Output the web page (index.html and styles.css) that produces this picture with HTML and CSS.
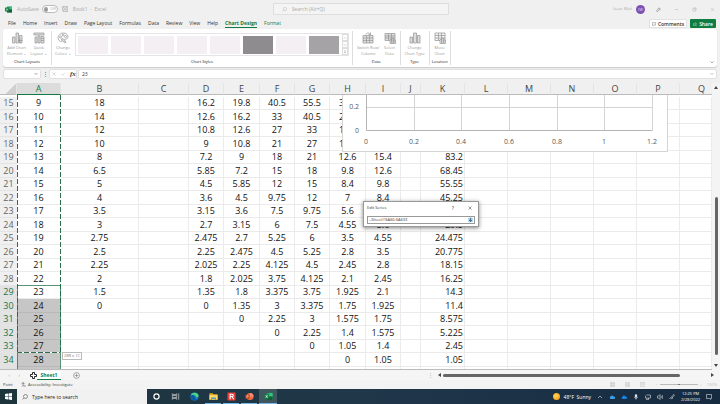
FILE: index.html
```html
<!DOCTYPE html>
<html lang="en">
<head>
<meta charset="UTF-8">
<meta name="viewport" content="width=device-width, initial-scale=1.0">
<title>Book1 - Excel</title>
<link rel="stylesheet" href="styles.css">
</head>
<body>

<header class="titlebar">
    <svg class="logo" viewBox="0 0 14 14"><rect x="4" y="1" width="10" height="12" rx="1" fill="#21a366"/><rect x="9" y="1" width="5" height="6" fill="#33c481"/><rect x="4" y="7" width="10" height="6" fill="#185c37"/><rect x="0" y="3" width="8" height="8" rx="1" fill="#107c41"/><path d="M2.300 5l3.400 4M5.700 5l-3.400 4" stroke="#fff" stroke-width="1.200"/></svg>
    <label class="autosave">AutoSave <span class="switch"><input type="checkbox"><span>Off</span></span></label>
    <svg class="save" viewBox="0 0 14 14" fill="none" stroke="#aaa" stroke-width="1.500"><path d="M1 1h12v12H3l-2-2zM4 1v4h6V1M4 13V8h6v5"/></svg>
    <span class="book">Book1 &nbsp;-&nbsp; Excel</span>
    <label class="search">
        <svg viewBox="0 0 12 12" fill="none" stroke="#aaa"><circle cx="7" cy="5" r="4"/><path d="M4 8L1 11"/></svg>
        <input type="text" placeholder="Search (Alt+Q)" aria-label="Search">
    </label>
    <div class="account">
        <span>Isaac Wait</span>
        <span class="avatar">IW</span>
        <svg viewBox="0 0 12 12" fill="none" stroke="#666"><path d="M2 8l5-6 3 2-5 6-3 1zM6 3l3 3M9 8l2-2"/></svg>
        <button aria-label="Minimize"><svg viewBox="0 0 12 12" stroke="#aaa"><path d="M2 6h8"/></svg></button>
        <button aria-label="Restore"><svg viewBox="0 0 12 12" fill="none" stroke="#aaa"><path d="M2 4h6v6H2zM4 4V2h6v6H8"/></svg></button>
        <button aria-label="Close"><svg viewBox="0 0 12 12" stroke="#aaa"><path d="M2 2l8 8M10 2l-8 8"/></svg></button>
    </div>
</header>

<nav class="menu">
    <a href="#">File</a>
    <a href="#">Home</a>
    <a href="#">Insert</a>
    <a href="#">Draw</a>
    <a href="#">Page Layout</a>
    <a href="#">Formulas</a>
    <a href="#">Data</a>
    <a href="#">Review</a>
    <a href="#">View</a>
    <a href="#">Help</a>
    <a href="#" class="green active">Chart Design</a>
    <a href="#" class="green">Format</a>
    <button class="comments"><svg viewBox="0 0 12 12" fill="none" stroke="#333"><path d="M1 2h10v7H5l-2 2V9H1z"/></svg>Comments</button>
    <button class="share"><svg viewBox="0 0 12 12" fill="none" stroke="#fff"><path d="M4 5H1v6h9V8M3 8c1-3 3-4 5-4V2l3 3-3 3V6"/></svg>Share</button>
</nav>

<section class="ribbon">
    <div class="group">
        <div class="tools">
            <button><svg viewBox="0 0 24 24" fill="#ddd" stroke="#999" stroke-width="1.500"><path d="M3 10h5v12H3zM10 2h5v20h-5zM17 7h5v15h-5z"/><path d="M14 17h9M18 13v9"/></svg>Add Chart<br>Element ⌄</button>
            <button><svg viewBox="0 0 24 24" fill="#ddd" stroke="#999" stroke-width="1.500"><path d="M2 2h20v4H2zM4 10h4v12H4zM10 8h4v14h-4z"/><path d="M16 9h6v13h-6zM16 13h6M16 17h6"/></svg>Quick<br>Layout ⌄</button>
        </div>
        <span class="name">Chart Layouts</span>
    </div>
    <div class="group styles">
        <div class="tools">
            <button><svg viewBox="0 0 24 24" fill="none" stroke="#999" stroke-width="1.500"><path d="M10 19c-5 1-8-4-8-8 0-5 5-9 11-9 5 0 9 3 9 8 0 3-2 4-4 4-3 0-4 1-3 4"/><circle cx="7" cy="10" r="2"/><circle cx="12" cy="6" r="2"/><circle cx="17" cy="9" r="2"/><path d="M8 15l4-2 6 7-2 2z" fill="#ddd"/></svg>Change<br>Colors ⌄</button>
            <div class="gallery">
                <button class="thumb" aria-label="Style 1"></button>
                <button class="thumb" aria-label="Style 2"></button>
                <button class="thumb" aria-label="Style 3"></button>
                <button class="thumb" aria-label="Style 4"></button>
                <button class="thumb" aria-label="Style 5"></button>
                <button class="thumb dark" aria-label="Style 6"></button>
                <button class="thumb" aria-label="Style 7"></button>
                <button class="thumb mid" aria-label="Style 8"></button>
                <div class="arrows">
                    <button aria-label="Up"><svg viewBox="0 0 8 8" fill="none" stroke="#aaa"><path d="M2 5l2-2 2 2"/></svg></button>
                    <button aria-label="Down"><svg viewBox="0 0 8 8" fill="none" stroke="#888"><path d="M2 3l2 2 2-2"/></svg></button>
                    <button aria-label="More"><svg viewBox="0 0 8 8" fill="none" stroke="#888"><path d="M2 2h4M2 4l2 2 2-2"/></svg></button>
                </div>
            </div>
        </div>
        <span class="name">Chart Styles</span>
    </div>
    <div class="group">
        <div class="tools">
            <button><svg viewBox="0 0 24 24" fill="#ddd" stroke="#999" stroke-width="1.500"><path d="M2 7h20v15H2zM2 12h20M2 17h20M9 7v15M15 7v15"/><path d="M7 5c3-4 8-4 10 0M17 1v4h-4" fill="none"/></svg>Switch Row/<br>Column</button>
            <button><svg viewBox="0 0 24 24" fill="#ddd" stroke="#999" stroke-width="1.500"><path d="M2 3h20v14H2zM2 8h20M2 12h20M9 3v14M15 3v14"/><path d="M12 15h3v8h-3zM16 12h3v11h-3zM20 16h3v7h-3z"/></svg>Select<br>Data</button>
        </div>
        <span class="name">Data</span>
    </div>
    <div class="group">
        <div class="tools">
            <button><svg viewBox="0 0 24 24" fill="#ddd" stroke="#999" stroke-width="1.500"><path d="M2 10h5v12H2zM9 2h6v20H9zM17 7h5v15h-5z"/></svg>Change<br>Chart Type</button>
        </div>
        <span class="name">Type</span>
    </div>
    <div class="group narrow">
        <div class="tools">
            <button><svg viewBox="0 0 24 24" fill="#f4f4f4" stroke="#999" stroke-width="1.500"><path d="M2 2h20v15H2zM2 7h20M2 12h20M9 2v15M15 2v15"/><path d="M12 15h3v8h-3zM16 12h3v11h-3zM20 16h3v7h-3z"/></svg>Move<br>Chart</button>
        </div>
        <span class="name">Location</span>
    </div>
    <button class="collapse" aria-label="Collapse ribbon"><svg viewBox="0 0 8 8" fill="none" stroke="#555"><path d="M1 3l3 3 3-3"/></svg></button>
</section>

<div class="formulabar">
    <div class="namebox"><select aria-label="Name box"><option></option></select><svg viewBox="0 0 8 8" fill="none" stroke="#555"><path d="M1 2l3 3 3-3"/></svg></div>
    <span class="dots">⋮</span>
    <div class="fx">
        <svg viewBox="0 0 10 10" stroke="#aaa"><path d="M1 1l8 8M9 1L1 9"/></svg>
        <svg viewBox="0 0 10 10" fill="none" stroke="#aaa"><path d="M1 6l3 3 5-7"/></svg>
        <i>fx</i>
    </div>
    <div class="formula"><input type="text" value="23" aria-label="Formula"><svg viewBox="0 0 8 8" fill="none" stroke="#888"><path d="M1 2l3 3 3-3"/></svg></div>
</div>

<main class="workarea">
    <div class="sheet">
        <table class="grid">
            <colgroup>
                <col class="num"><col class="c44"><col class="c78"><col class="c50">
                <col class="c35"><col class="c36"><col class="c35"><col class="c35"><col class="c36"><col class="c35">
                <col class="c20"><col class="c44">
                <col class="c43"><col class="c43"><col class="c43"><col class="c43"><col class="c43"><col>
            </colgroup>
            <thead>
                <tr>
                    <th class="corner"></th><th class="picked">A</th><th>B</th><th>C</th><th>D</th><th>E</th><th>F</th><th>G</th><th>H</th><th>I</th><th>J</th><th>K</th><th>L</th><th>M</th><th>N</th><th>O</th><th>P</th><th class="last">Q</th>
                </tr>
            </thead>
            <tbody id="rows"></tbody>
        </table>
        <div class="ants"></div>
        <div class="selection"></div>
        <span class="sizetip">28R x 1C</span>

        <svg class="chart" viewBox="0 0 324 56">
            <path d="M71.500 0v35M118.500 0v35M166.500 0v35M214.500 0v35M261.500 0v35M309.500 0v35M23 12.500h287" stroke="#d4d4d4" fill="none"/>
            <path d="M23.500 0v35.500h286" stroke="#b5b5b5" fill="none"/>
            <g text-anchor="end"><text x="16" y="14">0.2</text><text x="16" y="38">0</text></g>
            <g text-anchor="middle"><text x="23" y="49">0</text><text x="71" y="49">0.2</text><text x="118" y="49">0.4</text><text x="166" y="49">0.6</text><text x="214" y="49">0.8</text><text x="261" y="49">1</text><text x="309" y="49">1.2</text></g>
        </svg>

        <form class="dialog">
            <div class="dialog-title">
                <label for="series">Edit Series</label>
                <button type="button">?</button>
                <button type="button" aria-label="Close"><svg viewBox="0 0 8 8" stroke="#333"><path d="M1 1l6 6M7 1L1 7"/></svg></button>
            </div>
            <div class="dialog-input">
                <input type="text" id="series" value="=Sheet1!$A$6:$A$33">
                <button type="button" aria-label="Expand"><svg viewBox="0 0 8 8"><rect x="1" y="1" width="6" height="6" fill="#a9cbe0"/><path d="M4 1v5M2 4l2 2 2-2" stroke="#1e6091" fill="none"/></svg></button>
            </div>
        </form>
    </div>
    <div class="vscroll"><span class="up"></span><span class="thumbbar"></span><span class="down"></span></div>
</main>

<div class="sheettabs">
    <span class="arrow">‹</span><span class="arrow">›</span>
    <svg class="cross" viewBox="0 0 14 14"><path d="M5 1h4v4h4v4H9v4H5V9H1V5h4z" fill="#fff" stroke="#111" stroke-width="1.800"/></svg>
    <button class="tab">Sheet1</button>
    <button class="add" aria-label="New sheet"><svg viewBox="0 0 12 12" fill="none" stroke="#777"><circle cx="6" cy="6" r="5"/><path d="M3 6h6M6 3v6"/></svg></button>
    <div class="hscroll"><span class="grip">⋮</span><span class="left"></span><span class="bar"></span><span class="right"></span></div>
</div>

<div class="status">
    <span class="mode">Point</span>
    <svg viewBox="0 0 12 12" fill="none" stroke="#444"><circle cx="5" cy="2" r="1"/><path d="M1 4h8M5 4v3l-2 4M5 7l2 4M8 8l3 3M11 8l-3 3"/></svg>
    <span>Accessibility: Investigate</span>
    <div class="views">
        <svg viewBox="0 0 12 12" fill="none" stroke="#bbb"><path d="M1 1h10v10H1zM1 4h10M1 8h10M4 1v10M8 1v10"/></svg>
        <svg viewBox="0 0 12 12" fill="none" stroke="#bbb"><path d="M1 1h10v10H1zM3 3h6v6H3zM3 6h6"/></svg>
        <svg viewBox="0 0 12 12" fill="none" stroke="#bbb"><path d="M1 1h10v10H1zM4 1v6h4V1"/></svg>
        <span class="zoom">−<span class="track"></span>+</span>
        <span>100%</span>
    </div>
</div>

<footer class="taskbar">
    <button class="start" aria-label="Start"><svg viewBox="0 0 14 14" fill="#fff"><path d="M0 2l6-1v5.500H0zM7 1l7-1v6.500H7zM0 7.500h6V13l-6-1zM7 7.500h7V14l-7-1z"/></svg></button>
    <label class="find">
        <svg viewBox="0 0 12 12" fill="none" stroke="#333"><circle cx="7" cy="5" r="4"/><path d="M4 8L1 11"/></svg>
        <input type="text" placeholder="Type here to search" aria-label="Type here to search">
    </label>
    <button class="app" aria-label="Cortana"><svg viewBox="0 0 14 14" fill="none" stroke="#fff" stroke-width="1.800"><circle cx="7" cy="7" r="4"/></svg></button>
    <button class="app" aria-label="Task view"><svg viewBox="0 0 14 14" fill="none" stroke="#ddd"><path d="M2 2v2h7V2M2 12v-2h7v2M2 5.500h7v3H2zM12 2v10"/></svg></button>
    <button class="app" aria-label="Edge"><svg viewBox="0 0 20 20"><circle cx="10" cy="10" r="9" fill="#1b8fd9"/><path d="M2 7C5 0 17 0 19 8c0 4-4 5-7 4 2-4-4-8-10-5z" fill="#4fd27a"/><path d="M2 8c5-3 10 0 9 4 0 2 3 4 6 3-3 5-11 5-14 0-1-2-1-5-1-7z" fill="#0c59a4"/><path d="M11 9c2 1 2 3 1 4 2 1 5 1 7-2-1 2-8 4-8-2z" fill="#1c3440"/></svg></button>
    <button class="app open" aria-label="File Explorer"><svg viewBox="0 0 20 20"><path d="M1 3h7l2 2h9v12H1z" fill="#e8a922"/><path d="M1 7h18v10H1z" fill="#ffd968"/><path d="M5 12h10v5h-2v-2H7v2H5z" fill="#2a8dd6"/></svg></button>
    <button class="app open" aria-label="Reader"><svg viewBox="0 0 20 20"><rect x="1" y="1" width="18" height="18" rx="1" fill="#e5403a"/><path d="M7 16V5h4c4 0 4 5 0 5H7m4 0l4 6" stroke="#fff" stroke-width="2.500" fill="none"/></svg></button>
    <button class="app open" aria-label="PowerPoint"><svg viewBox="0 0 20 20"><circle cx="11" cy="10" r="8" fill="#ed6c47"/><path d="M11 2a8 8 0 0 1 8 8h-8z" fill="#ff8f6b"/><rect x="1" y="6" width="9" height="9" rx="1" fill="#c43e1c"/><path d="M4 13V8h2c2 0 2 3 0 3H4" stroke="#fff" fill="none"/></svg></button>
    <button class="app open current" aria-label="Excel"><svg viewBox="0 0 20 20"><rect x="6" y="2" width="13" height="16" rx="1" fill="#21a366"/><path d="M12 2h7v8h-7z" fill="#33c481"/><path d="M6 10h13v8H6z" fill="#185c37"/><rect x="1" y="5" width="10" height="10" rx="1" fill="#107c41"/><path d="M4 7l4 6M8 7l-4 6" stroke="#fff" stroke-width="1.500"/></svg></button>
    <div class="tray">
        <span class="sun"></span>
        <span class="weather">48°F &nbsp;Sunny</span>
        <svg viewBox="0 0 12 12" fill="none" stroke="#fff"><path d="M2 8l4-4 4 4"/></svg>
        <svg viewBox="0 0 12 12" fill="#3aa0ea"><path d="M3 10a3 3 0 0 1 0-5c1-3 5-3 6 0 4 0 4 5 1 5z"/></svg>
        <svg viewBox="0 0 12 12" fill="#1683e0"><path d="M3 10a3 3 0 0 1 0-5c1-3 5-3 6 0 4 0 4 5 1 5z"/></svg>
        <svg viewBox="0 0 12 12" fill="#fff" stroke="#fff"><rect x="4.500" y="1" width="3" height="6" rx="1.500"/><path d="M3 6c0 4 6 4 6 0M6 9v2" fill="none"/></svg>
        <svg viewBox="0 0 12 12" fill="none" stroke="#fff"><path d="M3 2h8v6H4M1 3v5h2v3h5M7 8v2"/></svg>
        <svg viewBox="0 0 12 12" fill="none" stroke="#fff"><path d="M1 4h2l3-3v10L3 8H1zM8 4c1 1 1 3 0 4M10 2c2 2 2 6 0 8"/></svg>
        <svg viewBox="0 0 12 12" fill="none" stroke="#fff"><path d="M1 10c2-4 3-3 4-1s3-1 1-2 1-4 4-6l1 1-5 6"/></svg>
        <span class="clock">12:25 PM<br>2/28/2022</span>
        <svg viewBox="0 0 12 12" fill="none" stroke="#fff"><path d="M1 1h10v8H9v2L7 9H1z"/></svg>
    </div>
</footer>

<script>
    // columns A to K, the rest of the row stays empty
    var rows = [
        [15, '9', '18', '', '16.2', '19.8', '40.5', '55.5', '3'],
        [16, '10', '14', '', '12.6', '16.2', '33', '40.5', '2'],
        [17, '11', '12', '', '10.8', '12.6', '27', '33', '1'],
        [18, '12', '10', '', '9', '10.8', '21', '27', '1'],
        [19, '13', '8', '', '7.2', '9', '18', '21', '12.6', '15.4', '', '83.2'],
        [20, '14', '6.5', '', '5.85', '7.2', '15', '18', '9.8', '12.6', '', '68.45'],
        [21, '15', '5', '', '4.5', '5.85', '12', '15', '8.4', '9.8', '', '55.55'],
        [22, '16', '4', '', '3.6', '4.5', '9.75', '12', '7', '8.4', '', '45.25'],
        [23, '17', '3.5', '', '3.15', '3.6', '7.5', '9.75', '5.6'],
        [24, '18', '3', '', '2.7', '3.15', '6', '7.5', '4.55', '5.6', '', '29.5'],
        [25, '19', '2.75', '', '2.475', '2.7', '5.25', '6', '3.5', '4.55', '', '24.475'],
        [26, '20', '2.5', '', '2.25', '2.475', '4.5', '5.25', '2.8', '3.5', '', '20.775'],
        [27, '21', '2.25', '', '2.025', '2.25', '4.125', '4.5', '2.45', '2.8', '', '18.15'],
        [28, '22', '2', '', '1.8', '2.025', '3.75', '4.125', '2.1', '2.45', '', '16.25'],
        [29, '23', '1.5', '', '1.35', '1.8', '3.375', '3.75', '1.925', '2.1', '', '14.3'],
        [30, '24', '0', '', '0', '1.35', '3', '3.375', '1.75', '1.925', '', '11.4'],
        [31, '25', '', '', '', '0', '2.25', '3', '1.575', '1.75', '', '8.575'],
        [32, '26', '', '', '', '', '0', '2.25', '1.4', '1.575', '', '5.225'],
        [33, '27', '', '', '', '', '', '0', '1.05', '1.4', '', '2.45'],
        [34, '28', '', '', '', '', '', '', '0', '1.05', '', '1.05'],
        ['', '']
    ];

    var body = document.getElementById('rows');
    for (var i = 0; i < rows.length; i++) {
        var tr = document.createElement('tr');
        if (i >= 14) {
            tr.className = 'selected';
        }
        for (var c = 0; c < 18; c++) {
            var cell = document.createElement(c === 0 ? 'th' : 'td');
            cell.textContent = rows[i][c] === undefined ? '' : rows[i][c];
            if (c === 1 && i > 14) {
                cell.className = 'shaded';
            }
            // column H runs under the chart here
            if (c === 8 && i < 4) {
                cell.className = 'cut';
            }
            if (c === 11) {
                cell.className = 'total';
            }
            tr.appendChild(cell);
        }
        body.appendChild(tr);
    }
</script>

</body>
</html>
```

FILE: styles.css
```css
* {
    box-sizing: border-box;
}
body {
    margin: 0;
    height: 100vh;
    display: flex;
    flex-direction: column;
    overflow: hidden;
    background: #f0f0f0;
    font-family: "Open Sans", "Noto Sans", sans-serif;
    font-size: 5px;
    line-height: 6px;
    color: #333;
}
button, input, select {
    font: inherit;
    color: inherit;
    border: none;
    background: none;
    padding: 0;
    margin: 0;
    outline: none;
}
svg {
    display: block;
    flex: none;
}
a {
    color: inherit;
    text-decoration: none;
}

/* title bar */
.titlebar {
    display: grid;
    grid-template-columns: auto auto auto 3fr auto 4fr;
    align-items: center;
    height: 18px;
    padding: 0 5px;
    color: #aaa;
}
.logo {
    width: 7px;
    height: 7px;
}
.autosave {
    display: flex;
    align-items: center;
    gap: 3px;
    margin-left: 5px;
}
.switch {
    display: flex;
    align-items: center;
    gap: 2px;
    width: 16px;
    height: 8px;
    padding: 0 1px;
    border: 1px solid #bbb;
    border-radius: 4px;
    font-size: 4px;
    background: #fff;
}
.switch input {
    appearance: none;
    width: 5px;
    height: 5px;
    border-radius: 50%;
    background: #999;
}
.save {
    width: 6px;
    height: 6px;
    margin: 0 5px 0 4px;
}
.search {
    display: flex;
    align-items: center;
    gap: 5px;
    width: 176px;
    height: 12px;
    padding: 0 8px;
    border: 1px solid #dedede;
    background: #f4f4f4;
}
.search svg {
    width: 5px;
    height: 5px;
}
.search input::placeholder {
    color: #aaa;
}
.account {
    display: flex;
    align-items: center;
    justify-content: flex-end;
    gap: 11px;
}
.account > span:first-child {
    font-size: 4px;
}
.account svg {
    width: 5px;
    height: 5px;
}
.account button {
    margin-left: 2px;
}
.avatar {
    width: 9px;
    height: 9px;
    margin-left: -7px;
    border-radius: 50%;
    background: #7a52b3;
    color: #e8dcf8;
    font-size: 4px;
    line-height: 9px;
    text-align: center;
}

/* ribbon tabs */
.menu {
    display: flex;
    align-items: center;
    gap: 7px;
    height: 11px;
    padding: 0 4px 0 8px;
}
.menu a {
    line-height: 8px;
    border-bottom: 1px solid transparent;
}
.menu .green {
    color: #107c41;
}
.menu .active {
    font-weight: bold;
    border-color: #107c41;
}
.menu button {
    display: flex;
    align-items: center;
    gap: 2px;
    height: 9px;
    padding: 0 2px;
    border-radius: 1px;
    font-weight: 600;
}
.menu button svg {
    width: 4px;
    height: 4px;
}
.menu .comments {
    margin-left: auto;
    background: #fff;
    border: 1px solid #e2e2e2;
}
.menu .share {
    margin-left: -4px;
    padding: 0 3px;
    background: #107c41;
    color: #fff;
}

/* ribbon */
.ribbon {
    display: flex;
    height: 38px;
    margin: 0 3px;
    padding: 2px 0;
    border-radius: 3px;
    background: #fff;
    box-shadow: 0 1px 1px #ccc;
    font-size: 4px;
}
.group {
    display: flex;
    flex-direction: column;
    justify-content: space-between;
    align-items: center;
    padding: 0 4px;
    border-right: 1px solid #ddd;
}
.group.styles {
    padding: 0 3px;
}
.group.narrow {
    padding: 0 2px;
}
.tools {
    display: flex;
    gap: 4px;
}
.tools > button {
    display: flex;
    flex-direction: column;
    align-items: center;
    color: #999;
    white-space: nowrap;
}
.tools > button svg {
    width: 12px;
    height: 12px;
    margin: 1px 0;
}
.name {
    color: #222;
}
.gallery {
    display: flex;
    align-items: center;
    gap: 3px;
    height: 23px;
    margin-top: 2px;
    padding-left: 2px;
    border: 1px solid #e4e4e4;
}
.thumb {
    width: 30px;
    height: 18px;
    background: #f3eff3;
}
.thumb.dark {
    background: #8e8c8f;
}
.thumb.mid {
    background: #a5a3a6;
}
.arrows {
    display: flex;
    flex-direction: column;
    height: 100%;
}
.arrows button {
    flex: 1;
    border: 1px solid #ddd;
}
.arrows svg {
    width: 4px;
    height: 4px;
}
.collapse {
    align-self: flex-end;
    margin: 0 3px 1px auto;
}
.collapse svg {
    width: 4px;
    height: 4px;
}

/* formula bar */
.formulabar {
    display: flex;
    align-items: center;
    height: 10px;
    margin: 2px 3px 4px;
}
.namebox, .fx, .formula {
    display: flex;
    align-items: center;
    height: 10px;
    border: 1px solid #e0e0e0;
    border-radius: 2px;
    background: #fff;
}
.formulabar svg {
    width: 4px;
    height: 4px;
}
.namebox {
    width: 38px;
    padding-right: 2px;
}
.namebox select {
    flex: 1;
    min-width: 0;
    height: 8px;
    appearance: none;
}
.dots {
    width: 8px;
    text-align: center;
}
.fx {
    gap: 5px;
    width: 28px;
    padding-left: 2px;
}
.fx i {
    font-family: "Liberation Serif", serif;
    font-size: 7px;
    font-weight: bold;
}
.formula {
    flex: 1;
    margin-left: 1px;
    padding: 0 2px 0 3px;
}
.formula input {
    flex: 1;
}

/* worksheet */
.workarea {
    flex: 1;
    min-height: 0;
    display: flex;
}
.sheet {
    position: relative;
    flex: 1;
    min-width: 0;
    overflow: hidden;
    background: #fff;
    border-bottom: 1px solid #bbb;
}
.grid {
    table-layout: fixed;
    width: 100%;
    border-collapse: separate;
    border-spacing: 0;
    font-size: 9px;
    line-height: 12px;
}
.grid th, .grid td {
    padding: 0;
    overflow: hidden;
    white-space: nowrap;
    text-align: center;
    font-weight: normal;
}
.num {
    width: 17px;
}
.c20 {
    width: 20px;
}
.c35 {
    width: 35px;
}
.c36 {
    width: 36px;
}
.c43 {
    width: 43px;
}
.c44 {
    width: 44px;
}
.c50 {
    width: 50px;
}
.c78 {
    width: 78px;
}
.grid thead th {
    height: 12px;
    line-height: 11px;
    background: #f0f0f0;
    color: #444;
    border-right: 1px solid #e4e4e4;
    border-bottom: 1px solid #bbb;
}
.grid thead .corner {
    background: linear-gradient(135deg, #f0f0f0 60%, #d0d0d0 60%);
}
.grid thead .picked {
    background: #dcdcdc;
    color: #107c41;
    border-bottom-color: #107c41;
}
.grid thead .last {
    padding-left: 11px;
    border-right: none;
}
/* rest of the row scrolled under the header */
.grid tbody::before {
    content: "";
    display: table-row;
    height: 2px;
}
.grid tbody tr {
    height: 14px;
}
.grid tbody tr:nth-child(odd) {
    height: 13px;
}
.grid tbody td {
    color: #111;
    border-right: 1px solid #ebebeb;
    border-bottom: 1px solid #ebebeb;
}
.grid tbody th {
    background: #f0f0f0;
    color: #666;
    border-bottom: 1px solid #e4e4e4;
}
.grid tbody .selected th {
    background: #e2e2e2;
    color: #217346;
}
.grid tbody .shaded {
    background: #c6c6c6;
    border-bottom-color: #b8b8b8;
}
.grid tbody .cut {
    text-align: left;
    padding-left: 9px;
}
.grid tbody .total {
    text-align: right;
    padding-right: 1px;
}
.ants {
    position: absolute;
    top: 12px;
    left: 17px;
    width: 44px;
    height: 258px;
    background:
        repeating-linear-gradient(#2c6e4c 0 5px, #fff 5px 7px) left / 1px 100% no-repeat,
        repeating-linear-gradient(#2c6e4c 0 5px, #fff 5px 7px) right / 1px 100% no-repeat,
        repeating-linear-gradient(90deg, #2c6e4c 0 5px, #fff 5px 7px) bottom / 100% 1px no-repeat;
}
.selection {
    position: absolute;
    top: 202px;
    bottom: 0;
    left: 17px;
    width: 44px;
    border: 1px solid #1e7145;
    border-bottom: none;
    opacity: 0.7;
}
.sizetip {
    position: absolute;
    top: 269px;
    left: 62px;
    padding: 0 1px;
    border: 1px solid #bbb;
    background: #fff;
    color: #777;
    font-size: 4px;
}
.chart {
    position: absolute;
    top: 12px;
    left: 342px;
    width: 326px;
    height: 57px;
    background: #fff;
    border: 1px solid #d4d4d4;
    border-top: none;
}
.chart text {
    font-size: 7px;
    fill: #595959;
}
.dialog {
    position: absolute;
    top: 118px;
    left: 363px;
    width: 116px;
    padding: 0 3px 2px;
    border: 1px solid #999;
    background: #fff;
    box-shadow: 0 1px 4px rgba(0,0,0,0.5);
}
.dialog-title {
    display: flex;
    align-items: center;
    gap: 14px;
    height: 12px;
    padding-right: 3px;
}
.dialog-title label {
    margin-right: auto;
    font-size: 4px;
}
.dialog-title svg {
    width: 4px;
    height: 4px;
}
.dialog-input {
    display: flex;
    align-items: center;
    height: 8px;
    margin-top: 2px;
    border: 1px solid #999;
}
.dialog-input input {
    flex: 1;
    min-width: 0;
    height: 6px;
    padding-left: 1px;
    font-size: 4px;
}
.dialog-input svg {
    width: 7px;
    height: 6px;
}

/* scroll bars */
.vscroll {
    display: flex;
    flex-direction: column;
    align-items: center;
    width: 8px;
    padding: 1px 0;
    background: #f4f4f4;
}
.thumbbar {
    width: 3px;
    height: 158px;
    margin: auto 0 9px;
    border-radius: 2px;
    background: #666;
}
.up, .down {
    border: 2px solid transparent;
}
.up {
    border-bottom: 3px solid #444;
}
.down {
    border-top: 3px solid #444;
}

/* sheet tabs */
.sheettabs {
    display: flex;
    align-items: center;
    height: 10px;
    background: #f5f5f5;
}
.arrow {
    width: 10px;
    text-align: right;
    color: #999;
}
.cross {
    width: 7px;
    height: 7px;
    margin-left: 10px;
}
.tab {
    width: 24px;
    height: 9px;
    background: #fff;
    border-bottom: 1px solid #107c41;
    color: #107c41;
    font-weight: bold;
}
.add {
    margin-left: 12px;
}
.add svg {
    width: 7px;
    height: 7px;
}
.hscroll {
    display: flex;
    align-items: center;
    flex: 0 0 40%;
    margin: 0 4px 0 auto;
}
.grip {
    width: 8px;
    color: #aaa;
}
.bar {
    flex: 1;
    height: 3px;
    margin: 0 31px 0 2px;
    border-radius: 2px;
    background: #666;
}
.left, .right {
    border: 2px solid transparent;
}
.left {
    border-right: 3px solid #444;
}
.right {
    border-left: 3px solid #444;
}

/* status bar */
.status {
    display: flex;
    align-items: center;
    gap: 2px;
    height: 9px;
    padding: 0 3px;
    background: #f3f3f3;
    color: #333;
    font-size: 4px;
}
.status svg {
    width: 5px;
    height: 5px;
}
.mode {
    width: 16px;
}
.views {
    display: flex;
    align-items: center;
    gap: 10px;
    margin-left: auto;
    color: #bbb;
}
.zoom {
    display: flex;
    align-items: center;
    gap: 2px;
}
.views > :last-child {
    margin-left: -5px;
}
.track {
    width: 38px;
    height: 1px;
    background: linear-gradient(90deg, #bbb 48%, #777 48% 52%, #bbb 52%);
}

/* windows taskbar */
.taskbar {
    display: flex;
    align-items: center;
    height: 15px;
    background: linear-gradient(90deg, #1d343b, #20374a 50%, #172b40);
    color: #fff;
}
.start {
    display: grid;
    place-items: center;
    width: 17px;
}
.start svg {
    width: 7px;
    height: 7px;
}
.find {
    display: flex;
    align-items: center;
    gap: 4px;
    width: 130px;
    height: 15px;
    padding-left: 5px;
    background: #f1f1f1;
    color: #222;
}
.find svg {
    width: 6px;
    height: 6px;
}
.find input {
    height: 10px;
    min-width: 0;
}
.find input::placeholder {
    color: #222;
}
.app {
    display: grid;
    place-items: center;
    width: 18px;
    height: 15px;
    margin-right: 1px;
}
.app svg {
    width: 9px;
    height: 9px;
}
.app.open {
    width: 16px;
    margin-left: 1px;
    border-bottom: 1px solid #76b9ed;
}
.app.current {
    width: 18px;
    background: #40575f;
}
.tray {
    display: flex;
    align-items: center;
    gap: 6px;
    margin-left: auto;
    padding-right: 8px;
}
.tray svg {
    width: 6px;
    height: 6px;
}
.sun {
    width: 7px;
    height: 7px;
    border-radius: 50%;
    background: radial-gradient(circle at 40% 40%, #ffd94a, #f28c1c);
}
.weather {
    margin-left: -2px;
}
.clock {
    text-align: center;
    font-size: 4px;
}
```
